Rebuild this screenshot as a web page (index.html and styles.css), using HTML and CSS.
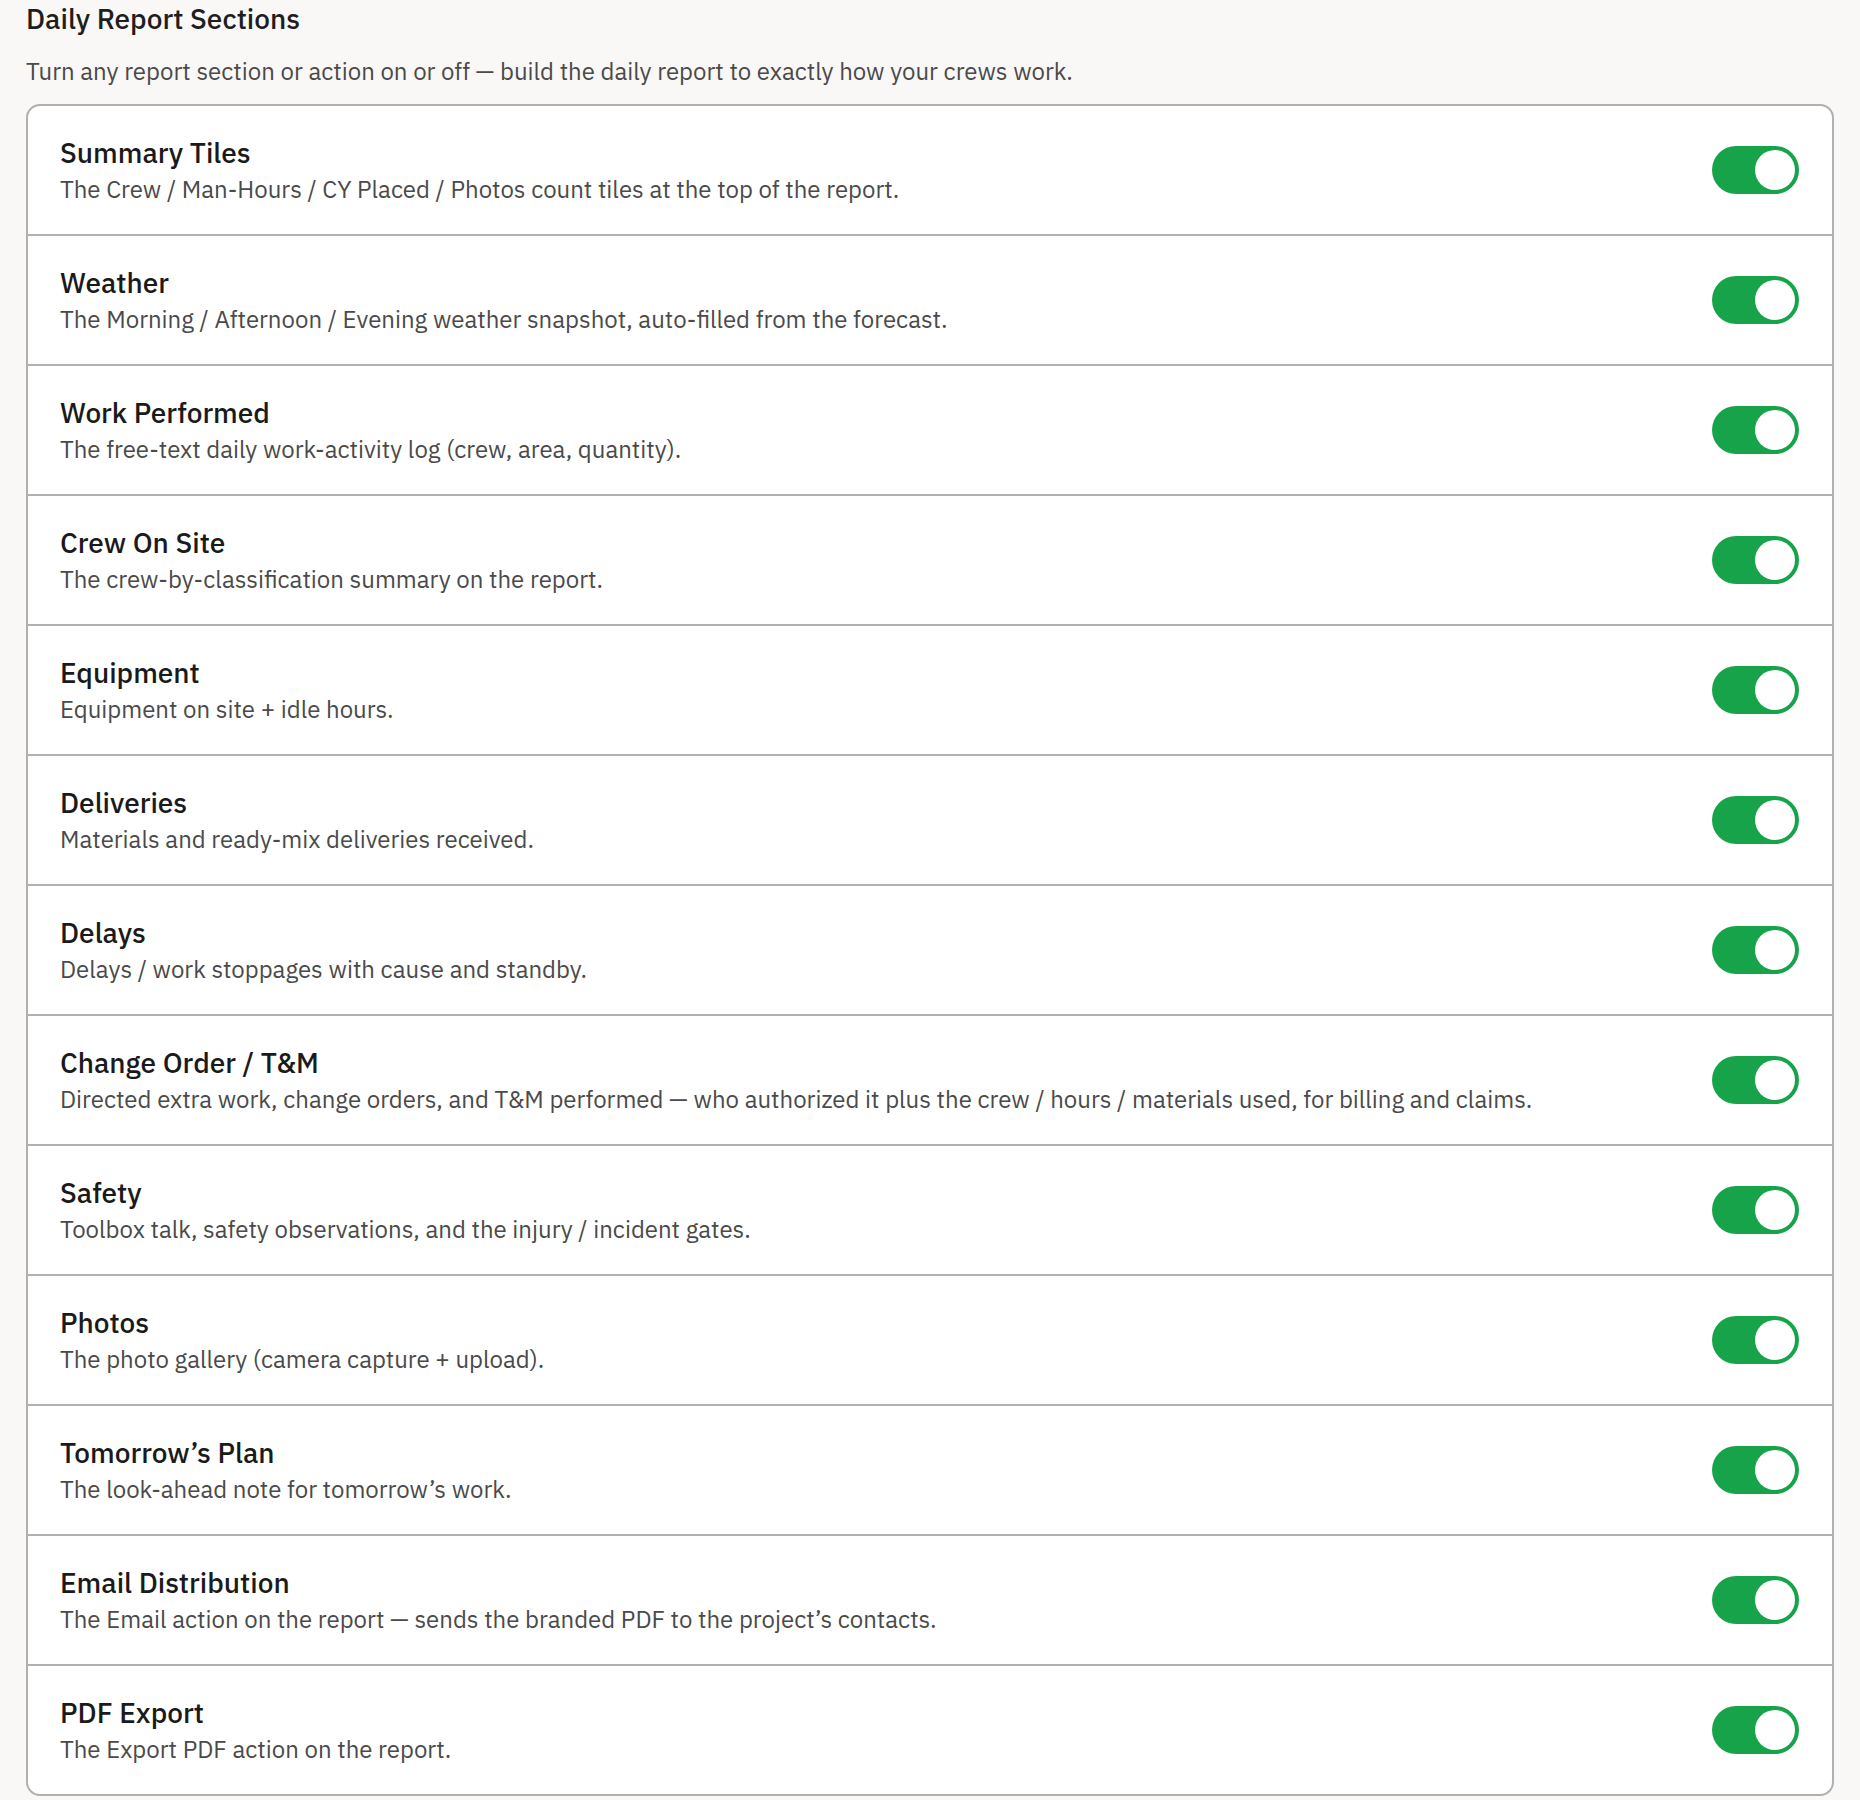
FILE: index.html
```html
<!DOCTYPE html>
<html lang="en">
<head>
<meta charset="utf-8">
<title>Daily Report Sections</title>
<link rel="stylesheet" href="styles.css">
</head>
<body>
<main class="page">
  <h2 class="page-title">Daily Report Sections</h2>
  <p class="page-desc">Turn any report section or action on or off — build the daily report to exactly how your crews work.</p>
  <section class="card">
    <div class="row">
      <div class="text"><div class="row-title">Summary Tiles</div><div class="row-desc">The Crew / Man-Hours / CY Placed / Photos count tiles at the top of the report.</div></div>
      <span class="toggle on"><span class="knob"></span></span>
    </div>
    <div class="row">
      <div class="text"><div class="row-title">Weather</div><div class="row-desc">The Morning / Afternoon / Evening weather snapshot, auto-filled from the forecast.</div></div>
      <span class="toggle on"><span class="knob"></span></span>
    </div>
    <div class="row">
      <div class="text"><div class="row-title">Work Performed</div><div class="row-desc">The free-text daily work-activity log (crew, area, quantity).</div></div>
      <span class="toggle on"><span class="knob"></span></span>
    </div>
    <div class="row">
      <div class="text"><div class="row-title">Crew On Site</div><div class="row-desc">The crew-by-classification summary on the report.</div></div>
      <span class="toggle on"><span class="knob"></span></span>
    </div>
    <div class="row">
      <div class="text"><div class="row-title">Equipment</div><div class="row-desc">Equipment on site + idle hours.</div></div>
      <span class="toggle on"><span class="knob"></span></span>
    </div>
    <div class="row">
      <div class="text"><div class="row-title">Deliveries</div><div class="row-desc">Materials and ready-mix deliveries received.</div></div>
      <span class="toggle on"><span class="knob"></span></span>
    </div>
    <div class="row">
      <div class="text"><div class="row-title">Delays</div><div class="row-desc">Delays / work stoppages with cause and standby.</div></div>
      <span class="toggle on"><span class="knob"></span></span>
    </div>
    <div class="row">
      <div class="text"><div class="row-title">Change Order / T&amp;M</div><div class="row-desc">Directed extra work, change orders, and T&amp;M performed — who authorized it plus the crew / hours / materials used, for billing and claims.</div></div>
      <span class="toggle on"><span class="knob"></span></span>
    </div>
    <div class="row">
      <div class="text"><div class="row-title">Safety</div><div class="row-desc">Toolbox talk, safety observations, and the injury / incident gates.</div></div>
      <span class="toggle on"><span class="knob"></span></span>
    </div>
    <div class="row">
      <div class="text"><div class="row-title">Photos</div><div class="row-desc">The photo gallery (camera capture + upload).</div></div>
      <span class="toggle on"><span class="knob"></span></span>
    </div>
    <div class="row">
      <div class="text"><div class="row-title">Tomorrow’s Plan</div><div class="row-desc">The look-ahead note for tomorrow’s work.</div></div>
      <span class="toggle on"><span class="knob"></span></span>
    </div>
    <div class="row">
      <div class="text"><div class="row-title">Email Distribution</div><div class="row-desc">The Email action on the report — sends the branded PDF to the project’s contacts.</div></div>
      <span class="toggle on"><span class="knob"></span></span>
    </div>
    <div class="row">
      <div class="text"><div class="row-title">PDF Export</div><div class="row-desc">The Export PDF action on the report.</div></div>
      <span class="toggle on"><span class="knob"></span></span>
    </div>
  </section>
</main>
</body>
</html>
```

FILE: styles.css
```css
html, body {
  margin: 0;
  padding: 0;
  background: #f9f8f6;
}
body {
  font-family: "IBM Plex Sans", Roboto, "Liberation Sans", sans-serif;
  color: #1c1c1c;
}
.page {
  padding: 3px 26px 0 26px;
}
.page-title {
  margin: 0;
  font-size: 28px;
  line-height: 32px;
  font-weight: 500;
  color: #1e1e1e;
}
.page-desc {
  margin: 21px 0 18px 0;
  font-size: 24px;
  line-height: 30px;
  color: #4a4a4a;
}
.card {
  width: 1808px;
  box-sizing: border-box;
  background: #ffffff;
  border: 2px solid #b0b0b0;
  border-radius: 14px;
  overflow: hidden;
}
.row {
  height: 128px;
  display: flex;
  align-items: center;
  justify-content: space-between;
  padding: 0 33px 0 32px;
  border-bottom: 2px solid #b0b0b0;
}
.row:last-child {
  border-bottom: none;
}
.text {
  display: flex;
  flex-direction: column;
}
.row-title {
  font-size: 28px;
  line-height: 34px;
  font-weight: 500;
  color: #1a1a1a;
}
.row-desc {
  margin-top: 3px;
  font-size: 24px;
  line-height: 32px;
  color: #4a4a4a;
}
.toggle {
  position: relative;
  flex: none;
  width: 87px;
  height: 48px;
  border-radius: 24px;
  background: #16a34a;
}
.knob {
  position: absolute;
  top: 4px;
  right: 4px;
  width: 40px;
  height: 40px;
  border-radius: 50%;
  background: #ffffff;
}
```
